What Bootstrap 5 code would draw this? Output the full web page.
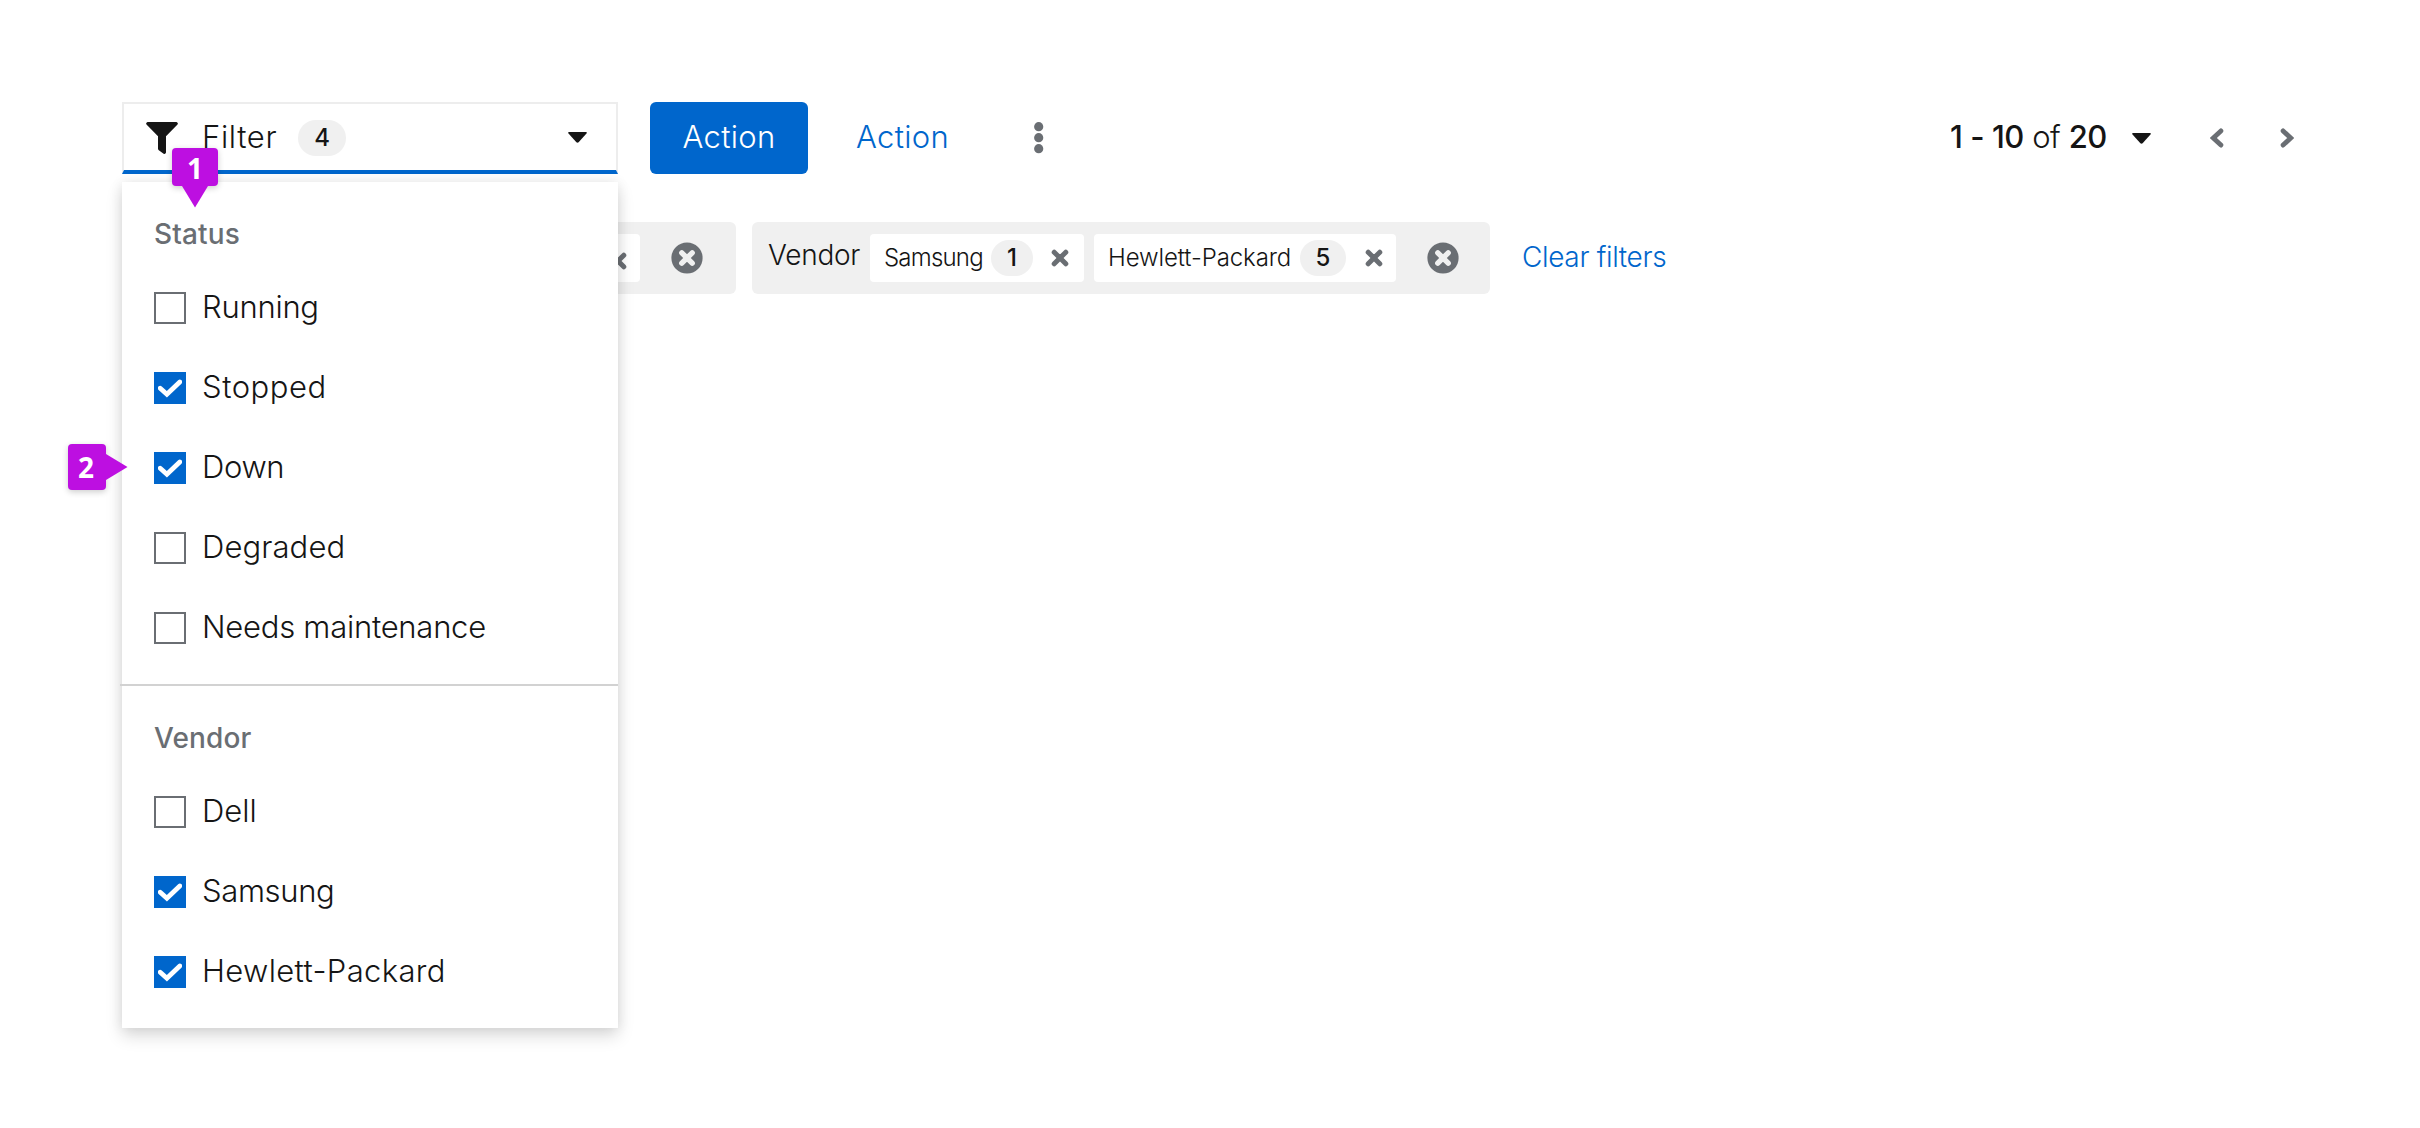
<!DOCTYPE html>
<html lang="en">
<head>
<meta charset="utf-8">
<meta name="viewport" content="width=device-width, initial-scale=1">
<title>Filter toolbar</title>
<link href="https://cdn.jsdelivr.net/npm/bootstrap@5.3.0/dist/css/bootstrap.min.css" rel="stylesheet">
<style>
body{background:#fff;color:#151515;font-family:Inter,"Liberation Sans",sans-serif;font-weight:300;font-size:31px;line-height:40px}
svg{display:block;flex:none}
.toolbar-page{padding:102px 114px 0 122px;min-height:1128px}
.bar-row{height:72px;white-space:nowrap}
.nudge{padding-bottom:2px}
.trk-1{letter-spacing:.3px}.trk-2{letter-spacing:.55px}.trk-h{letter-spacing:.35px}.trk-3{letter-spacing:.65px}.trk-0{letter-spacing:.1px}.trk-n{letter-spacing:-.1px}.trk-n2{letter-spacing:-.25px}.trk-n3{letter-spacing:-.35px}.trk-n6{letter-spacing:-.8px}
.filter-box{width:496px;height:72px}
.filter-toggle{height:72px;border:2px solid #ededed;border-bottom:4px solid #06c;padding:0 29px 0 22px}
.filter-toggle .funnel{margin-top:2px}
.count-pill{display:flex;align-items:center;justify-content:center;height:36px;border-radius:18px;background:#f0f0f0;font-size:24px;font-weight:500}
.filter-menu{position:absolute;top:80px;left:0;width:496px;height:846px;padding:32px 0 0;background:#fff;z-index:5;box-shadow:0 8px 16px rgba(3,3,3,.14),0 0 12px rgba(3,3,3,.08)}
.group-title{height:40px;margin:0 0 14px;padding-left:32px;font-size:28px;line-height:40px;font-weight:500;color:#6a6e73;letter-spacing:.15px}
.option{height:80px;padding-left:32px;gap:16px}
.box{width:32px;height:32px;border:2px solid #6a6e73;background:#fff}
.box.on{border-color:#06c;background:#06c}
.box.on svg{margin:5px 0 0 2px}
.menu-line{height:2px;margin:16px 0 32px -2px;background:#d2d2d2}
.btn-act{width:158px;height:72px;border:0;border-radius:6px;background:#06c;font:inherit;color:#fff;margin-left:32px;padding:0 0 2px}
.act-link{color:#06c;text-decoration:none}
.pager b{font-weight:500}
.pager-range{width:182px;letter-spacing:-.45px}
.chips-row{margin-top:48px;gap:16px}
.chip-group{height:72px;border-radius:6px;background:#f0f0f0}
.group-status{width:614px}
.group-vendor{width:738px;padding-left:16px}
.chip-label{width:102px;font-size:28px;padding-bottom:7px;letter-spacing:-.25px}
.chip-item{height:48px;border-radius:4px;background:#fff;font-size:24px;padding-left:14px}
.clear-link{font-size:28px;padding-bottom:3px;margin-left:16px}
.pin{position:absolute;z-index:10;background:#bd0fe1;color:#fff;border-radius:4px;font-family:"Noto Sans","Open Sans",sans-serif;font-weight:700;font-size:28px;display:flex;align-items:center;justify-content:center;box-shadow:0 2px 6px rgba(0,0,0,.2)}
.pin svg{position:absolute}
.pin-one{left:50px;top:46px;width:46px;height:38px;padding-top:1px}
.pin-one svg{left:10px;top:38px}
.pin-two{left:-54px;top:342px;width:38px;height:46px;padding:0 2px 1px 0}
.pin-two svg{left:38px;top:10px}
</style>
</head>
<body>
<svg width="0" height="0" class="position-absolute">
  <symbol id="i-x" viewBox="0 0 18 18"><path d="M3.2 3.2 14.8 14.8M14.8 3.2 3.2 14.8" stroke="#6a6e73" stroke-width="5" stroke-linecap="round"/></symbol>
  <symbol id="i-xc" viewBox="0 0 32 32"><circle cx="16" cy="16" r="15.6" fill="#6a6e73"/><path d="M10.8 10.8 21.2 21.2M21.2 10.8 10.8 21.2" stroke="#f0f0f0" stroke-width="5.4" stroke-linecap="round"/></symbol>
  <symbol id="i-caret" viewBox="0 0 19 11"><path d="M1 0H18Q19.4.4 18.5 1.6L10.6 10.2Q9.5 11.1 8.4 10.2L.5 1.6Q-.4.4 1 0Z" fill="#151515"/></symbol>
  <symbol id="i-check" viewBox="0 0 24 19"><path d="M2.2 9.2 8.9 15.2 21.8 3" fill="none" stroke="#fff" stroke-width="4.8" stroke-linecap="round" stroke-linejoin="miter"/></symbol>
</svg>
<main class="toolbar-page">
  <div class="bar-row d-flex align-items-center">
    <div class="filter-box position-relative">
      <div class="filter-toggle d-flex align-items-center">
        <svg class="funnel" width="32" height="32" viewBox="0 0 32 32"><path d="M1.5 0H30.5Q32.6.8 31.5 2.6L20 14.3V30.5Q19.5 32.4 17.6 31.7L12.8 28.3Q12 27.7 12 26.8V14.3L.5 2.6Q-.6.8 1.5 0Z" fill="#151515"/></svg>
        <span class="trk-3" style="margin-left:24px;width:96px">Filter</span>
        <span class="count-pill" style="width:48px;margin-top:2px">4</span>
        <svg class="ms-auto" width="19" height="11"><use href="#i-caret"/></svg>
      </div>
      <div class="filter-menu">
        <h6 class="group-title">Status</h6>
        <div class="option d-flex align-items-center"><span class="box"></span><span class="nudge trk-n2">Running</span></div>
        <div class="option d-flex align-items-center"><span class="box on"><svg width="24" height="19"><use href="#i-check"/></svg></span><span class="nudge trk-2">Stopped</span></div>
        <div class="option d-flex align-items-center"><span class="box on"><svg width="24" height="19"><use href="#i-check"/></svg></span><span class="nudge trk-n3">Down</span></div>
        <div class="option d-flex align-items-center"><span class="box"></span><span class="nudge trk-0">Degraded</span></div>
        <div class="option d-flex align-items-center"><span class="box"></span><span class="nudge trk-n2">Needs maintenance</span></div>
        <div class="menu-line"></div>
        <h6 class="group-title">Vendor</h6>
        <div class="option d-flex align-items-center"><span class="box"></span><span class="nudge">Dell</span></div>
        <div class="option d-flex align-items-center"><span class="box on"><svg width="24" height="19"><use href="#i-check"/></svg></span><span class="nudge trk-n3">Samsung</span></div>
        <div class="option d-flex align-items-center"><span class="box on"><svg width="24" height="19"><use href="#i-check"/></svg></span><span class="nudge trk-h">Hewlett-Packard</span></div>
      </div>
      <span class="pin pin-one">1<svg width="26" height="22"><path d="M0 0H26L13 21.5Z" fill="#bd0fe1"/></svg></span>
      <span class="pin pin-two">2<svg width="22" height="26"><path d="M0 0V26L21.5 13Z" fill="#bd0fe1"/></svg></span>
    </div>
    <button class="btn-act trk-1" type="button">Action</button>
    <a class="act-link nudge trk-1" href="#" style="margin-left:48px;width:178px">Action</a>
    <svg width="10" height="32" viewBox="0 0 10 32" fill="#6a6e73"><circle cx="4.7" cy="4.7" r="4.6"/><circle cx="4.7" cy="15.7" r="4.6"/><circle cx="4.7" cy="26.7" r="4.6"/></svg>
    <div class="pager d-flex align-items-center ms-auto">
      <span class="nudge pager-range"><b>1 - 10</b> of <b>20</b></span>
      <svg width="19" height="11"><use href="#i-caret"/></svg>
      <svg width="14" height="20" viewBox="0 0 14 20" style="margin-left:59px"><path d="M10.9 2.9 3.3 10 10.9 17.1" fill="none" stroke="#6a6e73" stroke-width="4.8" stroke-linecap="round"/></svg>
      <svg width="14" height="20" viewBox="0 0 14 20" style="margin-left:56px;margin-right:12px"><path d="M3.1 2.9 10.7 10 3.1 17.1" fill="none" stroke="#6a6e73" stroke-width="4.8" stroke-linecap="round"/></svg>
    </div>
  </div>
  <div class="bar-row chips-row d-flex align-items-center">
    <div class="chip-group group-status d-flex align-items-center justify-content-end">
      <span class="chip-item d-flex align-items-center" style="width:60px;padding-left:29px"><svg width="18" height="18" style="margin-top:5px"><use href="#i-x"/></svg></span>
      <svg width="32" height="32" style="margin:-1px 33px 0 31px"><use href="#i-xc"/></svg>
    </div>
    <div class="chip-group group-vendor d-flex align-items-center">
      <span class="chip-label">Vendor</span>
      <span class="chip-item d-flex align-items-center" style="width:214px"><span class="trk-n6" style="width:107px">Samsung</span><span class="count-pill" style="width:42px">1</span><svg width="18" height="18" style="margin-left:18px"><use href="#i-x"/></svg></span>
      <span class="chip-item d-flex align-items-center" style="width:302px;margin-left:10px"><span class="trk-n" style="width:192px">Hewlett-Packard</span><span class="count-pill" style="width:46px">5</span><svg width="18" height="18" style="margin-left:19px"><use href="#i-x"/></svg></span>
      <svg width="32" height="32" style="margin:-1px 0 0 31px"><use href="#i-xc"/></svg>
    </div>
    <a class="act-link clear-link trk-n3" href="#">Clear filters</a>
  </div>
</main>
<script src="https://cdn.jsdelivr.net/npm/bootstrap@5.3.0/dist/js/bootstrap.bundle.min.js"></script>
</body>
</html>
